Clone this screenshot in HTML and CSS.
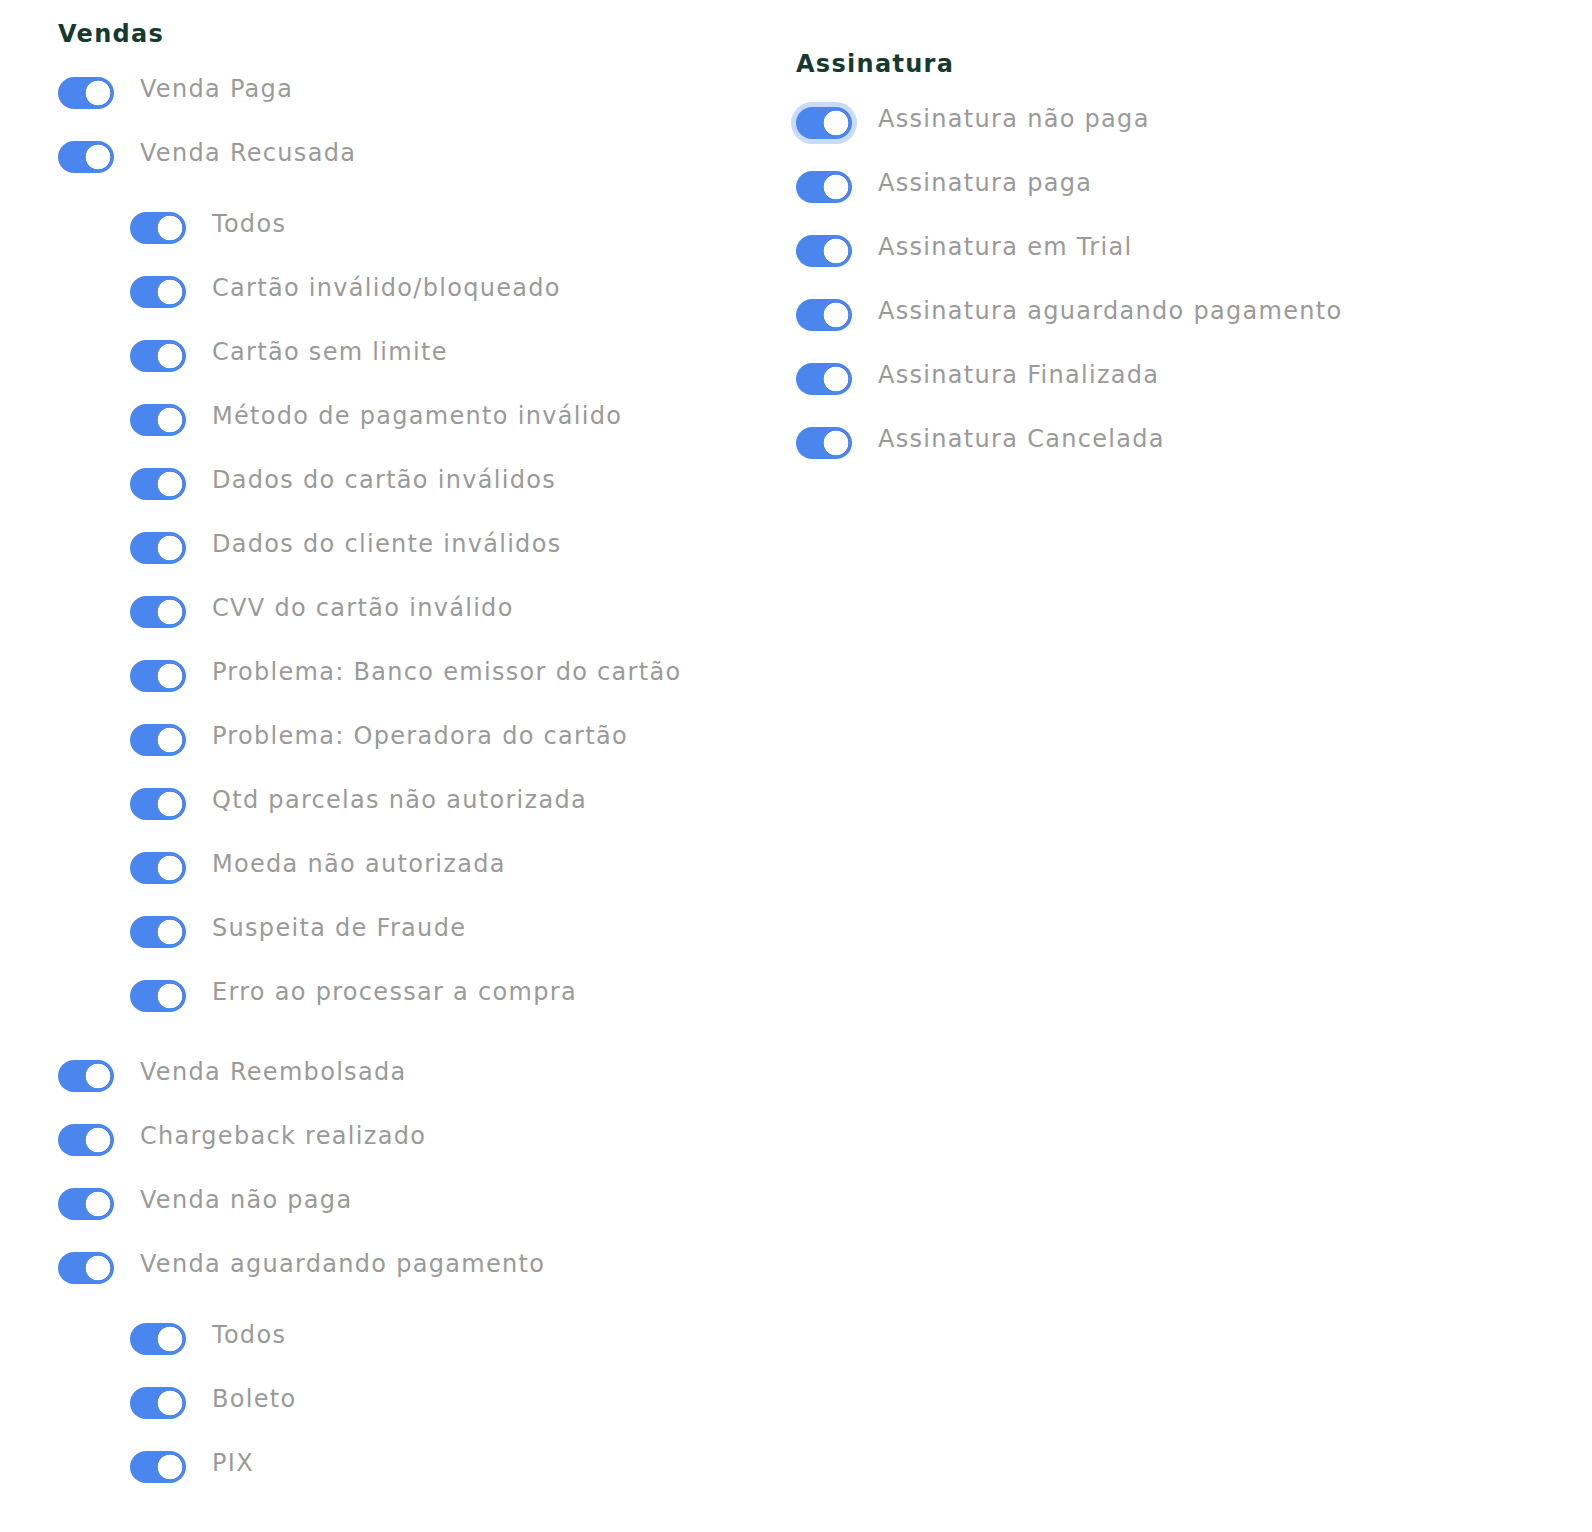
FILE: index.html
```html
<!DOCTYPE html>
<html lang="pt-BR">
<head>
    <meta charset="UTF-8">
    <title>Notificações</title>
    <link rel="stylesheet" href="styles.css">
</head>
<body>
    <div class="settings">
        <section class="group">
            <h2>Vendas</h2>
            <label class="row"><input type="checkbox" class="switch" checked><span>Venda Paga</span></label>
            <label class="row"><input type="checkbox" class="switch" checked><span>Venda Recusada</span></label>
            <div class="sub">
                <label class="row"><input type="checkbox" class="switch" checked><span>Todos</span></label>
                <label class="row"><input type="checkbox" class="switch" checked><span>Cartão inválido/bloqueado</span></label>
                <label class="row"><input type="checkbox" class="switch" checked><span>Cartão sem limite</span></label>
                <label class="row"><input type="checkbox" class="switch" checked><span>Método de pagamento inválido</span></label>
                <label class="row"><input type="checkbox" class="switch" checked><span>Dados do cartão inválidos</span></label>
                <label class="row"><input type="checkbox" class="switch" checked><span>Dados do cliente inválidos</span></label>
                <label class="row"><input type="checkbox" class="switch" checked><span>CVV do cartão inválido</span></label>
                <label class="row"><input type="checkbox" class="switch" checked><span>Problema: Banco emissor do cartão</span></label>
                <label class="row"><input type="checkbox" class="switch" checked><span>Problema: Operadora do cartão</span></label>
                <label class="row"><input type="checkbox" class="switch" checked><span>Qtd parcelas não autorizada</span></label>
                <label class="row"><input type="checkbox" class="switch" checked><span>Moeda não autorizada</span></label>
                <label class="row"><input type="checkbox" class="switch" checked><span>Suspeita de Fraude</span></label>
                <label class="row"><input type="checkbox" class="switch" checked><span>Erro ao processar a compra</span></label>
            </div>
            <label class="row"><input type="checkbox" class="switch" checked><span>Venda Reembolsada</span></label>
            <label class="row"><input type="checkbox" class="switch" checked><span>Chargeback realizado</span></label>
            <label class="row"><input type="checkbox" class="switch" checked><span>Venda não paga</span></label>
            <label class="row"><input type="checkbox" class="switch" checked><span>Venda aguardando pagamento</span></label>
            <div class="sub">
                <label class="row"><input type="checkbox" class="switch" checked><span>Todos</span></label>
                <label class="row"><input type="checkbox" class="switch" checked><span>Boleto</span></label>
                <label class="row"><input type="checkbox" class="switch" checked><span>PIX</span></label>
            </div>
        </section>
        <section class="group group-right">
            <h2>Assinatura</h2>
            <label class="row"><input type="checkbox" class="switch focus" checked><span>Assinatura não paga</span></label>
            <label class="row"><input type="checkbox" class="switch" checked><span>Assinatura paga</span></label>
            <label class="row"><input type="checkbox" class="switch" checked><span>Assinatura em Trial</span></label>
            <label class="row"><input type="checkbox" class="switch" checked><span>Assinatura aguardando pagamento</span></label>
            <label class="row"><input type="checkbox" class="switch" checked><span>Assinatura Finalizada</span></label>
            <label class="row"><input type="checkbox" class="switch" checked><span>Assinatura Cancelada</span></label>
        </section>
    </div>
</body>
</html>
```
FILE: styles.css
```css
body { margin: 0; background: #fff; font-family: "DejaVu Sans", "Open Sans", sans-serif; }
.settings { display: grid; grid-template-columns: 1fr 1fr; align-items: start; padding: 20px 58px 0; }
.group { display: flex; flex-direction: column; align-items: flex-start; }
.group h2 { margin: 0 0 29px; font-size: 24px; line-height: 28px; font-weight: 700; letter-spacing: 1.3px; color: #163a30; }
.group-right { margin-top: 30px; }
.row { display: flex; align-items: center; height: 32px; margin-bottom: 32px; }
.row span { padding-bottom: 8px; margin-left: 26px; font-size: 24px; letter-spacing: 1.3px; color: #9a9a9a; white-space: nowrap; }
.sub { display: flex; flex-direction: column; padding-left: 72px; margin: 7px 0 16px; }
.switch { appearance: none; -webkit-appearance: none; margin: 0; flex: none; width: 56px; height: 32px; border-radius: 16px; background: radial-gradient(circle at 40px 16px, #fff 12px, transparent 12.6px), #4b86ef; }
.switch.focus { box-shadow: 0 0 0 5px #c9dbfb; }
```
